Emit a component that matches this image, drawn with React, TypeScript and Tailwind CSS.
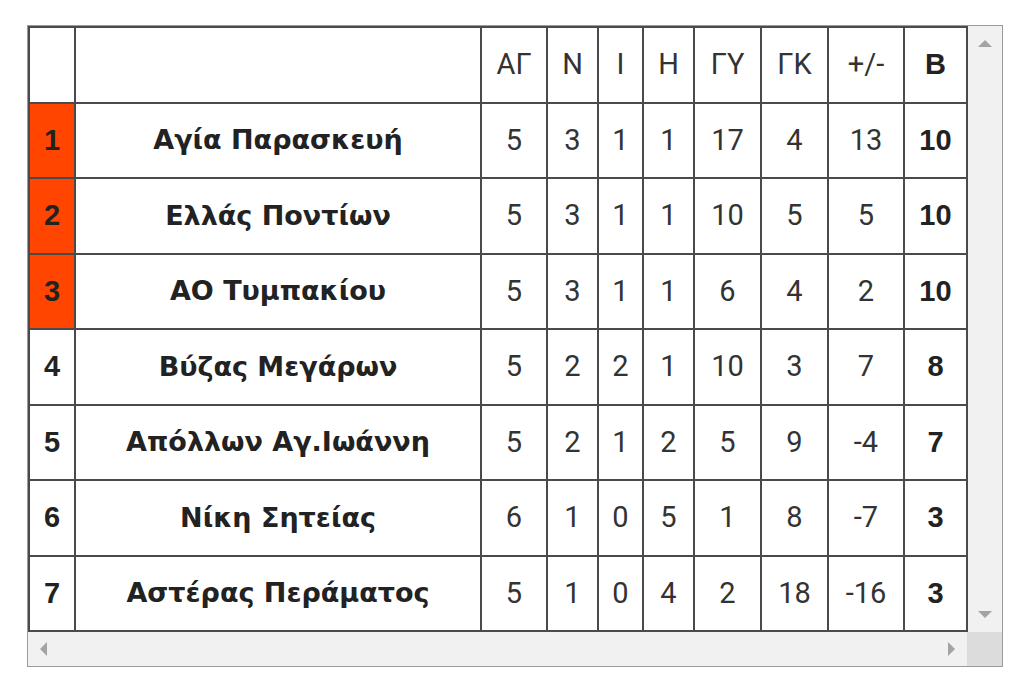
import React from "react";

type Row = {
  pos: number;
  team: string;
  stats: (number | string)[];
  pts: number;
  top?: boolean;
};

const rows: Row[] = [
  { pos: 1, team: "Αγία Παρασκευή", stats: [5, 3, 1, 1, 17, 4, 13], pts: 10, top: true },
  { pos: 2, team: "Ελλάς Ποντίων", stats: [5, 3, 1, 1, 10, 5, 5], pts: 10, top: true },
  { pos: 3, team: "ΑΟ Τυμπακίου", stats: [5, 3, 1, 1, 6, 4, 2], pts: 10, top: true },
  { pos: 4, team: "Βύζας Μεγάρων", stats: [5, 2, 2, 1, 10, 3, 7], pts: 8 },
  { pos: 5, team: "Απόλλων Αγ.Ιωάννη", stats: [5, 2, 1, 2, 5, 9, -4], pts: 7 },
  { pos: 6, team: "Νίκη Σητείας", stats: [6, 1, 0, 5, 1, 8, -7], pts: 3 },
  { pos: 7, team: "Αστέρας Περάματος", stats: [5, 1, 0, 4, 2, 18, -16], pts: 3 },
];

const headers = ["ΑΓ", "Ν", "Ι", "Η", "ΓΥ", "ΓΚ", "+/-"];
const widths = [46, 406, 66, 51, 45, 51, 67, 67, 76, 63];
const heights = [75, 76, 75, 76, 75, 76, 75];

const cell = "border-2 border-[#4a4a4a] text-center align-middle p-0";
const boldCell = `${cell} font-bold text-[#222] font-['Liberation_Sans',Arial,sans-serif]`;
const nameCell = `${cell} font-bold text-[#222] text-[27px] font-['DejaVu_Sans',Verdana,sans-serif]`;

function Arrow({ dir }: { dir: "up" | "down" | "left" | "right" }) {
  const pts = {
    up: "0,7 7,0 14,7",
    down: "0,0 14,0 7,7",
    left: "7,0 7,14 0,7",
    right: "0,0 0,14 7,7",
  }[dir];
  const vertical = dir === "up" || dir === "down";
  return (
    <svg width={vertical ? 14 : 7} height={vertical ? 7 : 14} viewBox={vertical ? "0 0 14 7" : "0 0 7 14"}>
      <polygon points={pts} fill="#a3a3a3" />
    </svg>
  );
}

export default function App() {
  return (
    <div className="w-[1024px] h-[694px] bg-white pt-[25px] pl-[27px]" style={{ fontFamily: "Roboto, 'Liberation Sans', sans-serif" }}>
      <div className="w-[976px] border border-[#9a9a9a] bg-white">
        <div className="flex">
          <table className="border-collapse table-fixed w-[939px] text-[29px] text-[#333]">
            <colgroup>
              {widths.map((w, i) => (
                <col key={i} style={{ width: w }} />
              ))}
            </colgroup>
            <tbody>
              <tr className="h-[76px]">
                <td className={cell}></td>
                <td className={cell}></td>
                {headers.map((h) => (
                  <td key={h} className={cell}>{h}</td>
                ))}
                <td className={boldCell}>B</td>
              </tr>
              {rows.map((r, i) => (
                <tr key={r.pos} style={{ height: heights[i] }}>
                  <td className={`${boldCell} ${r.top ? "bg-[#ff4500]" : ""}`}>{r.pos}</td>
                  <td className={nameCell}>{r.team}</td>
                  {r.stats.map((s, j) => (
                    <td key={j} className={cell}>{s}</td>
                  ))}
                  <td className={boldCell}>{r.pts}</td>
                </tr>
              ))}
            </tbody>
          </table>
          <div className="w-[35px] bg-[#f1f1f1] flex flex-col items-center justify-between pt-[14px] pb-[14px]">
            <Arrow dir="up" />
            <Arrow dir="down" />
          </div>
        </div>
        <div className="flex h-[34px]">
          <div className="flex-1 bg-[#f1f1f1] flex items-center justify-between pl-[12px] pr-[12px]">
            <Arrow dir="left" />
            <Arrow dir="right" />
          </div>
          <div className="w-[35px] bg-[#dcdcdc]"></div>
        </div>
      </div>
    </div>
  );
}
